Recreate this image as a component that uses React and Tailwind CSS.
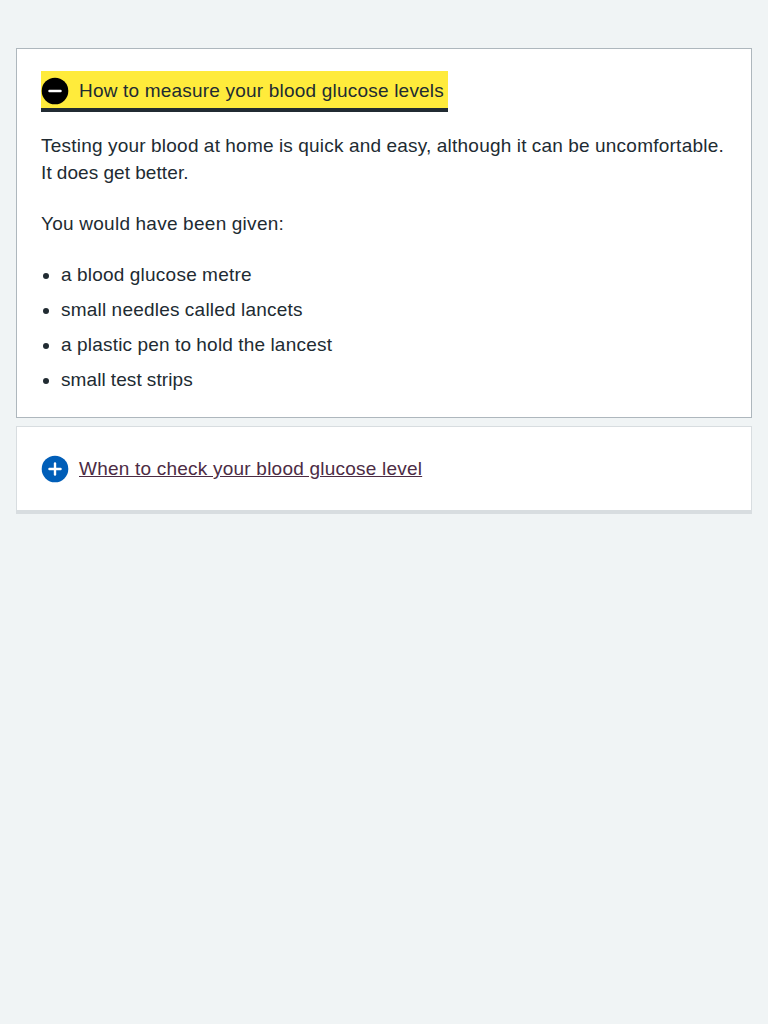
const items = [
  { text: 'a blood glucose metre', tracking: 'tracking-[0.245px]' },
  { text: 'small needles called lancets', tracking: 'tracking-[0.23px]' },
  { text: 'a plastic pen to hold the lancest', tracking: 'tracking-[0.225px]' },
  { text: 'small test strips', tracking: 'tracking-[0.1px]' },
];

function Icon({ open }) {
  return (
    <svg className="block h-[38px] w-[38px] shrink-0" viewBox="0 0 24 24" aria-hidden="true">
      <circle className={open ? 'fill-black' : 'fill-[#005eb8]'} cx="12" cy="12" r="8.4" />
      <g className="stroke-white" fill="none" strokeWidth="1.5" strokeLinecap="round">
        <path d="M8.5 12h7" />
        {!open && <path d="M12 8.5v7" />}
      </g>
    </svg>
  );
}

export default function App() {
  return (
    <main className="min-h-screen bg-[#f0f4f5] px-4 pt-12 font-['Liberation_Sans',Arial,sans-serif] text-[19px] leading-[27px] text-[#212b32] [word-spacing:-0.4px]">
      <section className="h-[370px] border border-[#aeb7bd] bg-white px-6 pt-[22px]">
        <button className="flex h-[41px] w-[407px] items-center border-b-4 border-[#212b32] bg-[#ffeb3b] pt-[3px] text-left whitespace-nowrap">
          <span className="-ml-[5px] flex items-center gap-[5px]">
            <Icon open />
            <span className="pb-0.5 tracking-[0.2px] [word-spacing:0px]">How to measure your blood glucose levels</span>
          </span>
        </button>
        <p className="mt-5">
          <span className="tracking-[0.24px]">
            Testing your blood at home is quick and easy, although it can be uncomfortable.
          </span>{' '}
          <br />
          <span className="tracking-[0.11px]">It does get better.</span>
        </p>
        <p className="mt-6 tracking-[0.3px]">You would have been given:</p>
        <ul className="mt-6 list-disc space-y-2 pl-5">
          {items.map(({ text, tracking }) => (
            <li key={text} className={tracking}>{text}</li>
          ))}
        </ul>
      </section>
      <section className="mt-2 flex h-[88px] items-center border border-b-4 border-[#d8dde0] bg-white px-6">
        <button className="-ml-[5px] flex items-center gap-[5px] text-[#4c2c44]">
          <Icon />
          <span className="tracking-[0.22px] underline [word-spacing:0px]">When to check your blood glucose level</span>
        </button>
      </section>
    </main>
  );
}
